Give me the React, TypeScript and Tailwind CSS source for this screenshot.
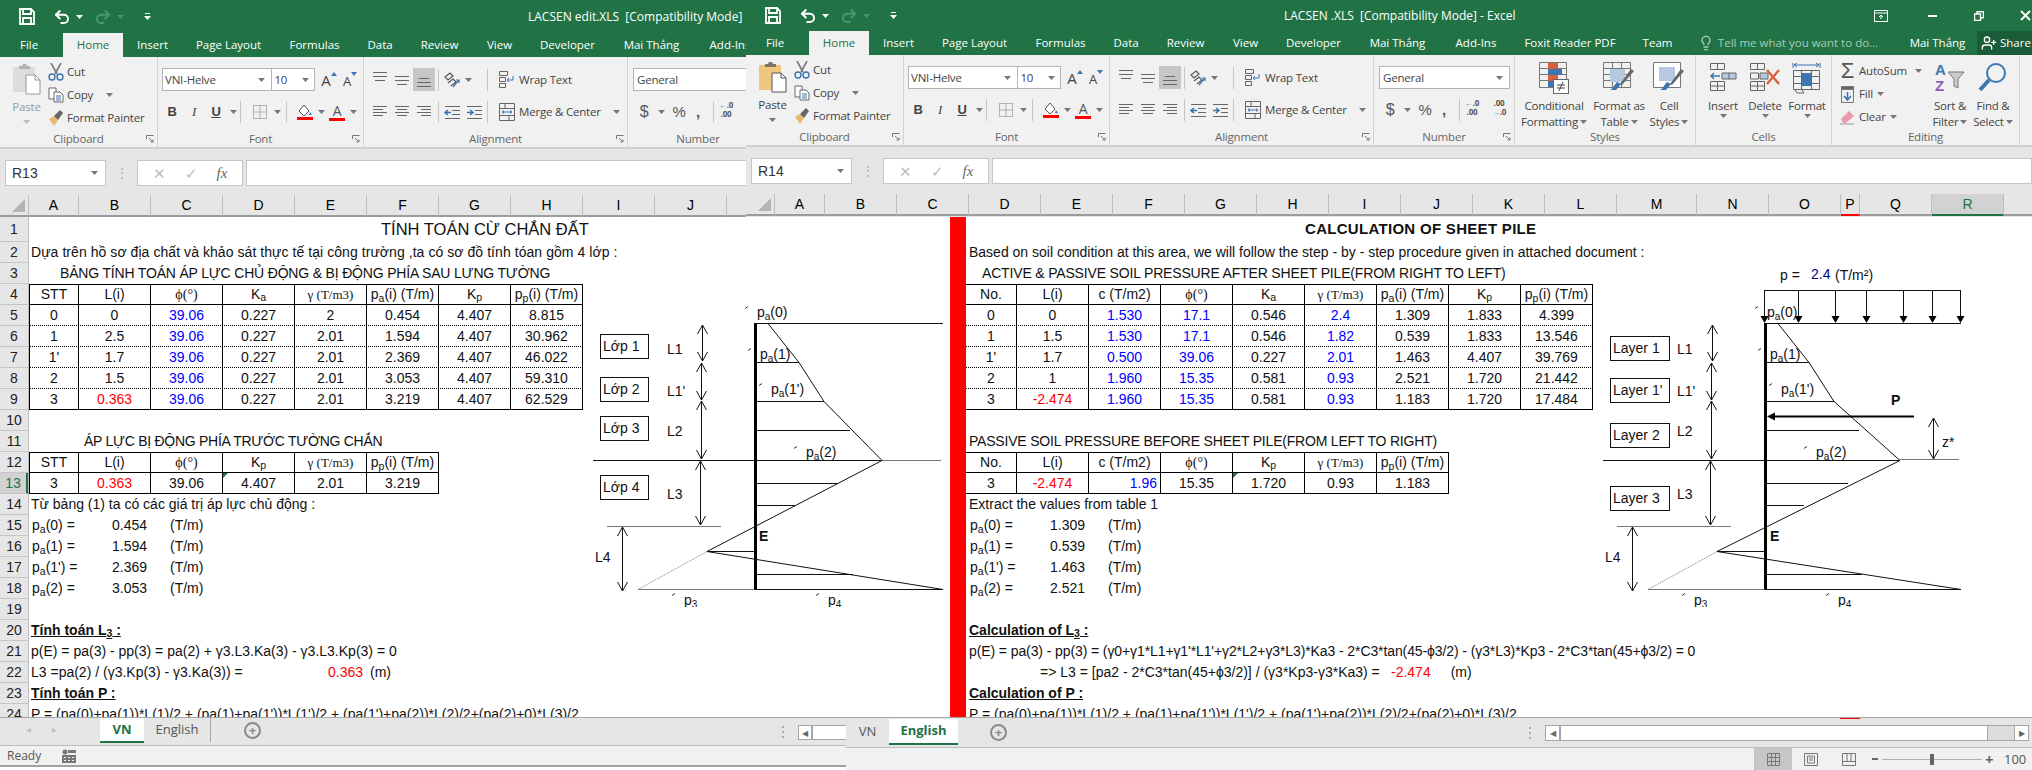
import type { ReactNode } from "react";
import { Lightbulb, Redo2, Undo2, UserPlus } from "lucide-react";

function Tri({ c = "#777" }: { c?: string }) {
  return (
    <svg width="7" height="4" viewBox="0 0 7 4" className="shrink-0">
      <path d="M0 0h7L3.5 4z" fill={c} />
    </svg>
  );
}

function Ic({ w = 16, h = 14, d, c = "#666", sw = 1 }: { w?: number; h?: number; d: string; c?: string; sw?: number }) {
  return (
    <svg width={w} height={h} viewBox={`0 0 ${w} ${h}`} fill="none" stroke={c} strokeWidth={sw} className="shrink-0">
      <path d={d} />
    </svg>
  );
}

function Launcher() {
  return (
    <svg width="8" height="8" viewBox="0 0 8 8" fill="none" stroke="#777" className="absolute right-[3px] bottom-[4px]">
      <path d="M.5 4V.5H7.5" />
      <path d="M3 3l4 4M7 4.5V7H4.5" />
    </svg>
  );
}

function Div() {
  return <div className="h-[22px] w-px shrink-0 bg-[#c6c6c6]" />;
}

function Group({ label, cls, children }: { label: string; cls: string; children: ReactNode }) {
  return (
    <div className={`relative h-full shrink-0 overflow-hidden border-r border-[#d2d2d2] ${cls}`}>
      {children}
      <div className="absolute inset-x-0 bottom-0 text-center leading-[16px] text-[#666]">{label}</div>
    </div>
  );
}

function PasteIcon({ muted }: { muted: boolean }) {
  const body = muted ? "#dedcdc" : "#efc680";
  const clip = muted ? "#b4b0b0" : "#7d7468";
  return (
    <svg width="30" height="32" viewBox="0 0 30 32">
      <rect x="1" y="4" width="22" height="25" rx="1" fill={body} />
      <path d="M7 5V3h3l1-2h3l1 2h3v3H7z" fill={clip} />
      <path d="M14 12h9l5 5v14H14z" fill="#fff" stroke={muted ? "#999" : "#555"} />
      <path d="M23 12v5h5" fill="none" stroke={muted ? "#999" : "#555"} />
    </svg>
  );
}

function Clipboard({ muted }: { muted: boolean }) {
  return (
    <Group label="Clipboard" cls="w-[158px]">
      <div className="flex h-[74px] pt-[6px]">
        <div className={`flex w-[48px] flex-col items-center pl-[5px] ${muted ? "text-[#999]" : "text-[#444]"}`}>
          <PasteIcon muted={muted} />
          <div className="mt-[4px] leading-[16px]">Paste</div>
          <div className="mt-[5px]"><Tri c={muted ? "#bbb" : "#777"} /></div>
        </div>
        <div className="flex flex-col gap-[5px] text-[#444]">
          <div className="flex h-[18px] items-center gap-[3px]">
            <svg width="16" height="18" viewBox="0 0 16 18" fill="none" className="shrink-0">
              <path d="M3 0l6 11M13 0L7 11" stroke="#777" strokeWidth="1.6" />
              <circle cx="4" cy="14" r="3" stroke="#3d75b0" strokeWidth="1.4" />
              <circle cx="12" cy="14" r="3" stroke="#3d75b0" strokeWidth="1.4" />
            </svg>
            <span>Cut</span>
          </div>
          <div className="flex h-[18px] items-center gap-[3px]">
            <svg width="16" height="16" viewBox="0 0 16 16" fill="#fff" stroke="#666" className="shrink-0">
              <path d="M1 1h7v11H1z" />
              <path d="M6 5h6l3 3v7H6z" />
              <path d="M8 9h5M8 11h5M8 13h5" stroke="#3d75b0" />
            </svg>
            <span>Copy</span>
            <span className="ml-[10px]"><Tri /></span>
          </div>
          <div className="flex h-[18px] items-center gap-[3px]">
            <svg width="16" height="18" viewBox="0 0 16 18" className="shrink-0">
              <path d="M1 10l5 7 4-6-4-4z" fill="#e8b96f" />
              <path d="M6 7l4 4 5-7-3-3z" fill="#666" />
            </svg>
            <span>Format Painter</span>
          </div>
        </div>
      </div>
      <Launcher />
    </Group>
  );
}

function Font() {
  return (
    <Group label="Font" cls="w-[206px]">
      <div className="flex h-[34px] items-start pl-[4px] pt-[11px]">
        <div className="flex h-[23px] w-[111px] items-center justify-between border border-[#b4b4b4] bg-white pl-[2px] pr-[6px]">
          <span>VNI-Helve</span>
          <Tri />
        </div>
        <div className="-ml-px flex h-[23px] w-[44px] items-center justify-between border border-[#b4b4b4] bg-white pl-[2px] pr-[5px]">
          <span>10</span>
          <Tri />
        </div>
        <div className="ml-[6px] flex h-[23px] w-[22px] items-end text-[15px] leading-[21px]">A<span className="mb-[15px] border-x-[3px] border-b-[4px] border-x-transparent border-b-[#3d75b0]" /></div>
        <div className="flex h-[23px] w-[20px] items-end text-[13px] leading-[20px]">A<span className="mb-[15px] border-x-[3px] border-t-[4px] border-x-transparent border-t-[#3d75b0]" /></div>
      </div>
      <div className="mt-[9px] flex h-[24px] items-center pl-[3px] text-[13px]">
        <div className="w-[22px] text-center font-['Liberation_Sans'] font-bold">B</div>
        <div className="w-[22px] text-center font-['Liberation_Serif'] italic">I</div>
        <div className="w-[22px] text-center font-['Liberation_Sans'] font-bold underline">U</div>
        <div className="flex w-[13px] justify-center"><Tri /></div>
        <div className="mr-[9px]"><Div /></div>
        <div className="flex w-[20px] justify-center">
          <svg width="14" height="15" viewBox="0 0 14 15" fill="none" stroke="#777" strokeDasharray="1 1">
            <path d="M.5.5h13v13H.5zM7 .5v13M.5 7h13" />
          </svg>
        </div>
        <div className="flex w-[14px] justify-center"><Tri /></div>
        <div className="ml-[2px] mr-[8px]"><Div /></div>
        <div className="flex w-[20px] flex-col items-center">
          <svg width="16" height="13" viewBox="0 0 16 13" fill="#fff" stroke="#555">
            <path d="M2 7l5-6 5 6-5 5z" />
            <path d="M13 8l2 3h-3z" fill="#3d75b0" stroke="none" />
          </svg>
          <div className="h-[3px] w-[16px] bg-[#ff0000]" />
        </div>
        <div className="flex w-[12px] justify-center"><Tri /></div>
        <div className="flex w-[20px] flex-col items-center">
          <div className="text-[14px] leading-[14px] text-[#555]">A</div>
          <div className="h-[3px] w-[16px] bg-[#ff0000]" />
        </div>
        <div className="flex w-[13px] justify-center"><Tri /></div>
      </div>
      <Launcher />
    </Group>
  );
}

function Alignment() {
  return (
    <Group label="Alignment" cls="w-[264px]">
      <div className="flex h-[34px] items-start pl-[5px] pt-[11px]">
        <div className="flex h-[23px] w-[22px] justify-center pt-[3px]"><Ic d="M1 1.5h14M1 5.5h14M3 9.5h10" /></div>
        <div className="flex h-[23px] w-[22px] items-center justify-center"><Ic d="M1 3.5h14M1 7.5h14M3 11.5h10" /></div>
        <div className="flex h-[23px] w-[22px] items-end justify-center bg-[#c6c6c6] pb-[2px]"><Ic d="M3 3.5h10M1 7.5h14M1 11.5h14" /></div>
        <div className="ml-[3px] pt-[1px]"><Div /></div>
        <div className="flex h-[23px] w-[26px] items-center justify-center">
          <svg width="18" height="18" viewBox="0 0 18 18" fill="none" stroke="#555" strokeWidth="1.2">
            <path d="M2 6l5-4 3 3-5 4zM5 12l5-4 3 3-5 4" />
            <path d="M10 16l6-7M13 9h3v3" stroke="#3d75b0" />
          </svg>
        </div>
        <div className="flex h-[23px] w-[8px] items-center"><Tri /></div>
        <div className="ml-[14px] pt-[1px]"><Div /></div>
        <div className="ml-[11px] flex h-[23px] items-center gap-[5px] text-[#444]">
          <svg width="15" height="17" viewBox="0 0 15 17" fill="none" stroke="#666">
            <path d="M.5.5h8v4h-8zM.5 6.5h6v4h-6zM.5 12.5h6v4h-6zM3 .5h3" />
            <path d="M14 5v4h-6M10 7L8 9l2 2" stroke="#3d75b0" />
          </svg>
          <span>Wrap Text</span>
        </div>
      </div>
      <div className="mt-[9px] flex h-[24px] items-center pl-[5px]">
        <div className="flex w-[22px] justify-center"><Ic d="M1 1.5h14M1 4.5h10M1 7.5h14M1 10.5h10" /></div>
        <div className="flex w-[22px] justify-center"><Ic d="M1 1.5h14M3 4.5h10M1 7.5h14M3 10.5h10" /></div>
        <div className="flex w-[22px] justify-center"><Ic d="M1 1.5h14M5 4.5h10M1 7.5h14M5 10.5h10" /></div>
        <div className="ml-[3px]"><Div /></div>
        <div className="flex w-[26px] justify-center">
          <svg width="17" height="15" viewBox="0 0 17 15" fill="none" stroke="#666">
            <path d="M1 1.5h15M8 5.5h8M8 9.5h8M1 13.5h15" />
            <path d="M7 7.5H1M4 5L1 7.5 4 10" stroke="#3d75b0" strokeWidth="1.6" />
          </svg>
        </div>
        <div className="flex w-[18px] justify-center">
          <svg width="17" height="15" viewBox="0 0 17 15" fill="none" stroke="#666">
            <path d="M1 1.5h15M9 5.5h7M9 9.5h7M1 13.5h15" />
            <path d="M1 7.5h6M4 5l3 2.5L4 10" stroke="#3d75b0" strokeWidth="1.6" />
          </svg>
        </div>
        <div className="ml-[4px]"><Div /></div>
        <div className="ml-[11px] flex items-center gap-[4px] text-[#444]">
          <svg width="16" height="18" viewBox="0 0 16 18" fill="none" stroke="#666">
            <path d="M.5.5h15v17H.5zM.5 5.5h15M.5 12.5h15M6 .5v5M10 12.5v5" />
            <path d="M3 9h10M5 7.5L3 9l2 1.500M11 7.5L13 9l-2 1.500" stroke="#3d75b0" />
          </svg>
          <span>Merge &amp; Center</span>
          <span className="ml-[8px]"><Tri /></span>
        </div>
      </div>
      <Launcher />
    </Group>
  );
}

function DecIcon({ up }: { up: boolean }) {
  return (
    <div className="flex h-[24px] w-[20px] flex-col items-center text-[8px] font-bold leading-[9px] text-[#555]">
      <div className="flex items-center">
        <span className="text-[#3d75b0]">{up ? "←" : ""}</span>
        <span>{up ? ".0" : ".00"}</span>
      </div>
      <div className="flex items-center">
        <span className="text-[#3d75b0]">{up ? "" : "→"}</span>
        <span>{up ? ".00" : ".0"}</span>
      </div>
    </div>
  );
}

function NumberGroup() {
  return (
    <Group label="Number" cls="w-[141px]">
      <div className="h-[34px] pl-[5px] pt-[11px]">
        <div className="flex h-[23px] w-[131px] items-center justify-between border border-[#b4b4b4] bg-white pl-[3px] pr-[6px]">
          <span>General</span>
          <Tri />
        </div>
      </div>
      <div className="mt-[9px] flex h-[24px] items-center pl-[6px] text-[#555]">
        <div className="w-[20px] text-center font-['Liberation_Sans'] text-[16px]">$</div>
        <div className="flex w-[14px] justify-center"><Tri /></div>
        <div className="w-[22px] text-center font-['Liberation_Sans'] text-[15px]">%</div>
        <div className="w-[16px] text-center font-['Liberation_Sans'] text-[15px] font-bold">,</div>
        <div className="ml-[7px]"><Div /></div>
        <div className="ml-[2px] flex gap-[7px]">
          <DecIcon up />
          <DecIcon up={false} />
        </div>
      </div>
      <Launcher />
    </Group>
  );
}

function BigBtn({ cls, lines, children }: { cls: string; lines: ReactNode[]; children: ReactNode }) {
  return (
    <div className={`flex flex-col items-center text-[#444] ${cls}`}>
      <div className="flex h-[32px] items-start">{children}</div>
      <div className="mt-[4px] flex flex-col items-center leading-[16px]">
        {lines.map((l, i) => (
          <div key={i} className="flex items-center gap-[2px] whitespace-nowrap">{l}</div>
        ))}
      </div>
    </div>
  );
}

function Grid4({ c = "#777" }: { c?: string }) {
  return <path d="M.5.5h27v25H.5zM9.5.5v25M18.5.5v25M.5 6.5h27M.5 12.5h27M.5 18.5h27" fill="none" stroke={c} />;
}

function Styles() {
  return (
    <Group label="Styles" cls="w-[181px]">
      <div className="flex pt-[7px]">
        <BigBtn cls="w-[78px]" lines={["Conditional", <>Formatting <Tri /></>]}>
          <svg width="30" height="32" viewBox="0 0 30 32">
            <Grid4 />
            <path d="M9 1h9v6H9z" fill="#d9603c" />
            <path d="M9 7h14v6H9z" fill="#3d75b0" />
            <path d="M9 13h9v6H9z" fill="#d9603c" />
            <path d="M9 19h5v6H9z" fill="#3d75b0" />
            <rect x="14.5" y="17.5" width="15" height="14" fill="#fff" stroke="#666" />
            <path d="M18 23h8M18 26h8M24 20l-4 9" stroke="#444" fill="none" />
          </svg>
        </BigBtn>
        <BigBtn cls="w-[52px]" lines={["Format as", <>Table <Tri /></>]}>
          <svg width="32" height="30" viewBox="0 0 32 30">
            <Grid4 />
            <path d="M7 7h15v13H7z" fill="#b6c9e0" />
            <path d="M31 9L19 23l-2-1L28 7z" fill="#666" />
            <path d="M18 22l-5 6h-6c3-1 4-5 7-8z" fill="#3d75b0" />
          </svg>
        </BigBtn>
        <BigBtn cls="w-[48px]" lines={["Cell", <>Styles <Tri /></>]}>
          <svg width="32" height="30" viewBox="0 0 32 30">
            <path d="M.5.5h27v25H.5z" fill="#fff" stroke="#777" />
            <path d="M6 5h16v14H6z" fill="#b6c9e0" />
            <path d="M31 9L19 23l-2-1L28 7z" fill="#666" />
            <path d="M18 22l-5 6h-6c3-1 4-5 7-8z" fill="#3d75b0" />
          </svg>
        </BigBtn>
      </div>
    </Group>
  );
}

function Cells() {
  return (
    <Group label="Cells" cls="w-[136px]">
      <div className="flex pl-[7px] pt-[7px]">
        <BigBtn cls="w-[40px]" lines={["Insert", <Tri />]}>
          <svg width="28" height="30" viewBox="0 0 28 30" fill="none" stroke="#666">
            <path d="M1.5 1.5h14v6h-14zM8.5 1.5v6M1.5 19.5h14v9h-14zM8.5 19.5v9M1.5 24h14" />
            <path d="M13 11h14v6H13zM20 11v6" fill="#b6c9e0" />
            <path d="M11 14H2M5 11l-3 3 3 3" stroke="#3d75b0" strokeWidth="1.5" />
          </svg>
        </BigBtn>
        <BigBtn cls="w-[44px]" lines={["Delete", <Tri />]}>
          <svg width="32" height="30" viewBox="0 0 32 30" fill="none" stroke="#666">
            <path d="M1.5 1.5h14v6h-14zM8.5 1.5v6M1.5 19.5h14v9h-14zM8.5 19.5v9M1.5 24h14M1.5 11h8v6h-8z" />
            <path d="M11 11h8v6h-8z" fill="#b6c9e0" />
            <path d="M18 8l12 14M30 8L18 22" stroke="#d9603c" strokeWidth="2.4" />
          </svg>
        </BigBtn>
        <BigBtn cls="w-[40px]" lines={["Format", <Tri />]}>
          <svg width="30" height="32" viewBox="0 0 30 32" fill="none" stroke="#666">
            <path d="M1 1v5M28 1v5M2 3h25M5 1L2 3l3 2M24 1l3 2-3 2" stroke="#3d75b0" />
            <path d="M1.5 8.5h26v19h-26zM9.5 8.5v19M19.5 8.5v19M1.5 14.5h26M1.5 21.5h26" />
            <path d="M10 11h9v13h-9z" fill="#3d75b0" stroke="none" />
            <path d="M3 28l2 3h7l-2-3" />
          </svg>
        </BigBtn>
      </div>
    </Group>
  );
}

function Editing() {
  return (
    <Group label="Editing" cls="w-[188px]">
      <div className="flex pt-[7px]">
        <div className="flex w-[97px] flex-col gap-[5px] pl-[8px] text-[#444]">
          <div className="flex h-[18px] items-center gap-[4px]">
            <span className="w-[15px] text-center font-['Liberation_Sans'] text-[22px] leading-[18px] text-[#555]">Σ</span>
            <span>AutoSum</span>
            <span className="ml-[4px]"><Tri /></span>
          </div>
          <div className="flex h-[18px] items-center gap-[4px]">
            <svg width="15" height="17" viewBox="0 0 15 17" fill="none" stroke="#777" className="shrink-0">
              <path d="M1.5.5h12v16h-12z" />
              <path d="M1.5 .5h12v3h-12z" fill="#666" />
              <path d="M7.5 6v8M4 10l3.5 4 3.500-4" stroke="#3d75b0" strokeWidth="1.6" />
            </svg>
            <span>Fill</span>
            <Tri />
          </div>
          <div className="flex h-[18px] items-center gap-[4px]">
            <svg width="15" height="15" viewBox="0 0 15 15" className="shrink-0">
              <path d="M1 9l8-8 5 5-8 7H3z" fill="#ea9aaa" />
              <path d="M0 14h14" stroke="#999" />
            </svg>
            <span>Clear</span>
            <Tri />
          </div>
        </div>
        <BigBtn cls="w-[42px]" lines={["Sort &", <>Filter <Tri /></>]}>
          <svg width="32" height="32" viewBox="0 0 32 32">
            <text x="1" y="13" fontSize="15" fontWeight="700" fontFamily="Liberation Sans" fill="#3d75b0">A</text>
            <text x="1" y="29" fontSize="15" fontWeight="700" fontFamily="Liberation Sans" fill="#8e5bb5">Z</text>
            <path d="M14 10h16l-6 7v9l-4-2v-7z" fill="#ccc" stroke="#777" />
          </svg>
        </BigBtn>
        <BigBtn cls="w-[44px]" lines={["Find &", <>Select <Tri /></>]}>
          <svg width="30" height="32" viewBox="0 0 30 32" fill="none">
            <circle cx="18" cy="11" r="9" stroke="#3d75b0" strokeWidth="2" />
            <path d="M11 18L2 28" stroke="#3d75b0" strokeWidth="4" />
          </svg>
        </BigBtn>
      </div>
    </Group>
  );
}

const tabs: [string, string][] = [
  ["Insert", "w-[29px]"],
  ["Page Layout", "w-[65px]"],
  ["Formulas", "w-[49px]"],
  ["Data", "w-[24px]"],
  ["Review", "w-[37px]"],
  ["View", "w-[25px]"],
  ["Developer", "w-[53px]"],
  ["Mai Thắng", "w-[57px]"],
  ["Add-Ins", "w-[42px]"],
  ["Foxit Reader PDF", "w-[88px]"],
  ["Team", "w-[29px]"],
];

function Chrome({ title, titleCls, name, muted, tall, children }: { title: string; titleCls: string; name: string; muted: boolean; tall: boolean; children: ReactNode }) {
  // the left window is covered by the right one past Add-Ins, so it stops there
  const shown = tall ? tabs.slice(0, 9) : tabs;
  return (
    <div className="h-[217px] w-[1286px] shrink-0 bg-[#e6e6e6] font-['Open_Sans',sans-serif] text-[11.5px] text-[#444]">
      <div className="bg-[#217346] text-white">
        <div className={`flex items-center pl-[19px] ${tall ? "h-[33px]" : "h-[31px]"}`}>
          <svg width="16" height="17" viewBox="0 0 16 17" fill="none" stroke="#fff" strokeWidth="1.8" className="shrink-0">
            <path d="M1 1h11l3 3v12H1zM4 1v5h8V1M4 16v-6h8v6" />
          </svg>
          <Undo2 size={18} strokeWidth={2.6} className="ml-[18px]" />
          <span className="ml-[5px]"><Tri c="#fff" /></span>
          <Redo2 size={18} strokeWidth={2.6} className="ml-[11px] text-[#4f9472]" />
          <span className="ml-[5px]"><Tri c="#4f9472" /></span>
          <div className="ml-[20px] flex flex-col items-center gap-[2px]">
            <div className="h-px w-[5px] bg-white" />
            <Tri c="#fff" />
          </div>
          <div className={`whitespace-pre text-[12px] ${titleCls}`}>{title}</div>
          {!tall && (
            <div className="ml-auto flex items-center pr-[1px]">
              <svg width="14" height="12" viewBox="0 0 14 12" fill="none" stroke="#fff">
                <path d="M.5.500h13v11H.5zM.5 3h13M7 9V5M5 7l2-2 2 2" />
              </svg>
              <div className="ml-[40px] h-[2px] w-[9px] bg-white" />
              <svg width="10" height="10" viewBox="0 0 10 10" fill="none" stroke="#fff" strokeWidth="1.4" className="ml-[37px]">
                <path d="M.5 3h6v6.500h-6zM3 3V.700h6.500v6H7" />
              </svg>
              <svg width="11" height="11" viewBox="0 0 11 11" fill="none" stroke="#fff" strokeWidth="1.8" className="ml-[36px]">
                <path d="M1 1l9 9M10 1l-9 9" />
              </svg>
            </div>
          )}
        </div>
        <div className="flex h-[24px] items-center whitespace-nowrap">
          <div className="w-[63px] pl-[20px]">File</div>
          <div className="flex h-full w-[60px] items-center justify-center bg-[#f1f1f1] text-[#217346]">Home</div>
          <div className="flex gap-[29px] pl-[15px]">
            {shown.map(([t, w]) => (
              <span key={t} className={`flex justify-center ${w}`}>{t}</span>
            ))}
          </div>
          {!tall && (
            <>
              <Lightbulb size={16} className="ml-[26px] shrink-0 text-[#a8cdb8]" />
              <span className="ml-[4px] flex w-[160px] justify-center text-[#a8cdb8]">Tell me what you want to do...</span>
              <span className="ml-[31px] flex w-[57px] justify-center">Mai Thắng</span>
              <div className="ml-auto flex h-full w-[55px] items-center gap-[3px] bg-[#1a5c38] pl-[4px]">
                <UserPlus size={16} className="shrink-0" />
                <span>Share</span>
              </div>
            </>
          )}
        </div>
      </div>
      <div className="flex h-[92px] border-b-2 border-[#d0d0d0] bg-[#f1f1f1] tracking-[-0.2px]">
        <Clipboard muted={muted} />
        <Font />
        <Alignment />
        <NumberGroup />
        {!tall && (
          <>
            <Styles />
            <Cells />
            <Editing />
          </>
        )}
      </div>
      <div className="mt-[11px] flex h-[26px] items-stretch">
        <div className="ml-[5px] flex w-[101px] items-center justify-between border border-[#c6c6c6] bg-white pl-[6px] pr-[7px] font-['Liberation_Sans'] text-[14px] text-[#333]">
          <span>{name}</span>
          <Tri />
        </div>
        <div className="flex w-[31px] items-center justify-center text-[#aaa]">⋮</div>
        <div className="flex w-[106px] items-center justify-around border border-[#c6c6c6] bg-white px-[5px]">
          <span className="text-[15px] text-[#bdbdbd]">✕</span>
          <span className="text-[15px] text-[#bdbdbd]">✓</span>
          <span className="font-['Liberation_Serif'] text-[15px] italic text-[#666]">fx</span>
        </div>
        <div className="ml-[3px] flex-1 border border-[#c6c6c6] bg-white" />
      </div>
      {children}
    </div>
  );
}

function ColHead({ label, cls, active }: { label: string; cls: string; active?: "green" | "red" }) {
  const line = active === "green" ? "border-b-[#217346] bg-[#d2d2d2] text-[#217346]" : active === "red" ? "border-b-[#ff0000]" : "border-b-[#9c9c9c]";
  return <div className={`flex h-full shrink-0 items-center justify-center border-b-2 border-r border-r-[#bdbdbd] ${line} ${cls}`}>{label}</div>;
}

function HeaderRow({ cols, mt }: { cols: ReactNode; mt: string }) {
  return (
    <div className={`flex h-[22px] font-['Liberation_Sans'] text-[14px] text-black ${mt}`}>
      <div className="flex h-full w-[29px] shrink-0 items-end justify-end border-b-2 border-r border-b-[#9c9c9c] border-r-[#bdbdbd] pb-[3px] pr-[3px]">
        <div className="h-0 w-0 border-b-[13px] border-l-[13px] border-b-[#b4b4b4] border-l-transparent" />
      </div>
      {cols}
      <div className="flex-1 border-b-2 border-b-[#9c9c9c]" />
    </div>
  );
}

function P({ s, t }: { s: string; t: string }) {
  return <span>p<sub>{s}</sub>{t}</span>;
}

const phi = <span className="font-['Liberation_Serif']">ϕ(°)</span>;
const gam = <span className="font-['Liberation_Serif'] text-[13px]">γ (T/m3)</span>;

function TableRow({ cells, dotted, top, right }: { cells: ReactNode[]; dotted?: boolean; top?: boolean; right?: boolean }) {
  return (
    <div className={`flex h-[21px] w-max border-b border-black ${dotted ? "border-dotted" : ""} ${top ? "border-t border-t-black" : ""}`}>
      {cells.map((c, i) => (
        <div
          key={i}
          className={`relative flex h-full items-center justify-center whitespace-pre border-r border-solid border-black ${
            i === 0 ? (right ? "w-[51px]" : "w-[50px] border-l") : "w-[72px]"
          }`}
        >
          {c}
        </div>
      ))}
    </div>
  );
}

function B({ children }: { children: ReactNode }) {
  return <span className="text-[#0000ff]">{children}</span>;
}
function R({ children }: { children: ReactNode }) {
  return <span className="text-[#ff0000]">{children}</span>;
}

function Flag() {
  return <div className="absolute left-0 top-0 h-0 w-0 border-r-[5px] border-t-[5px] border-r-transparent border-t-[#107c41]" />;
}

function Line({ children, cls = "" }: { children?: ReactNode; cls?: string }) {
  return <div className={`flex h-[21px] items-center whitespace-pre ${cls}`}>{children}</div>;
}

function PLine({ t, v, a, b }: { t: string; v: string; a: string; b: string }) {
  return (
    <Line cls={a}>
      <span className={b}><P s="a" t={t} /></span>
      <span className="w-[58px]">{v}</span>
      <span>(T/m)</span>
    </Line>
  );
}

function VArrow({ x, y1, y2 }: { x: number; y1: number; y2: number }) {
  return (
    <path
      d={`M${x} ${y1}V${y2}M${x - 5} ${y1 + 9}L${x} ${y1}L${x + 5} ${y1 + 9}M${x - 5} ${y2 - 9}L${x} ${y2}L${x + 5} ${y2 - 9}`}
      fill="none"
      stroke="#111"
    />
  );
}

function Sym({ x, y, s, t }: { x: number; y: number; s: string; t: string }) {
  return (
    <text x={x} y={y} fontSize="14" fontFamily="Liberation Sans" fill="#111">
      p<tspan dy="3" fontSize="10">{s}</tspan><tspan dy="-3">{t}</tspan>
    </text>
  );
}

function Txt({ x, y, t, b, c }: { x: number; y: number; t: string; b?: boolean; c?: string }) {
  return (
    <text x={x} y={y} fontSize="14" fontWeight={b ? 700 : 400} fontFamily="Liberation Sans" fill={c ?? "#111"}>
      {t}
    </text>
  );
}

function Tick({ x, y }: { x: number; y: number }) {
  return <path d={`M${x} ${y + 1.5}l3 -2`} stroke="#333" fill="none" />;
}

function Box({ x, y, w, t }: { x: number; y: number; w: number; t: string }) {
  return (
    <g>
      <rect x={x + 0.5} y={y + 0.5} width={w} height="24" fill="#fff" stroke="#111" />
      <Txt x={x + 3} y={y + 17} t={t} />
    </g>
  );
}

function DiagramLeft() {
  return (
    <svg width="355" height="390" viewBox="590 217 355 390" className="absolute left-[561px] top-0">
      <Box x={600} y={334} w={48} t="Lớp 1" />
      <Box x={600} y={377} w={48} t="Lớp 2" />
      <Box x={600} y={416} w={48} t="Lớp 3" />
      <Box x={600} y={475} w={48} t="Lớp 4" />
      <Txt x={667} y={354} t="L1" />
      <Txt x={667} y={396} t="L1'" />
      <Txt x={667} y={436} t="L2" />
      <Txt x={667} y={499} t="L3" />
      <Txt x={595} y={562} t="L4" />
      <VArrow x={702.5} y1={325} y2={361} />
      <VArrow x={701.5} y1={363} y2={400} />
      <VArrow x={701.5} y1={401} y2={459} />
      <VArrow x={700.5} y1={461} y2={525} />
      <VArrow x={622.5} y1={527} y2={591} />
      <path d="M755 323.500H943M593 460.500H880" stroke="#111" fill="none" />
      <path d="M880 460.500H941M607 526.500H721M638 589.500H755" stroke="#777" fill="none" />
      <path d="M755 589.500H943" stroke="#111" fill="none" />
      <path d="M755.500 323V589.500" stroke="#000" strokeWidth="3" fill="none" />
      <path d="M768 323.500L799 362.500L824 401.500L882 460.500L707 551.500L943 589.500" stroke="#111" fill="none" />
      <path d="M707 551.500L638 589.500" stroke="#777" strokeDasharray="1 1" fill="none" />
      <path d="M757 362.500H799M757 401.500H824M757 430.500H850M757 483.500H838M757 505.500H795M707 551.500H754M757 574.500H853" stroke="#111" fill="none" />
      <Tick x={745} y={307} />
      <Sym x={757} y={317} s="a" t="(0)" />
      <Tick x={748} y={349} />
      <Sym x={760} y={359} s="a" t="(1)" />
      <Tick x={759} y={384} />
      <Sym x={771} y={394} s="a" t="(1')" />
      <Tick x={794} y={447} />
      <Sym x={806} y={457} s="a" t="(2)" />
      <Txt x={759} y={541} t="E" b />
      <Tick x={672} y={594} />
      <Sym x={684} y={605} s="3" t="" />
      <Tick x={816} y={594} />
      <Sym x={828} y={605} s="4" t="" />
    </svg>
  );
}

function DiagramRight() {
  const xs = [1764.5, 1798.5, 1835.5, 1866.5, 1903.5, 1932.5, 1960.5];
  return (
    <svg width="380" height="345" viewBox="1595 262 380 345" className="absolute left-[629px] top-[45px]">
      <Box x={1610} y={336} w={59} t="Layer 1" />
      <Box x={1610} y={378} w={59} t="Layer 1'" />
      <Box x={1610} y={423} w={59} t="Layer 2" />
      <Box x={1610} y={486} w={59} t="Layer 3" />
      <Txt x={1677} y={354} t="L1" />
      <Txt x={1677} y={396} t="L1'" />
      <Txt x={1677} y={436} t="L2" />
      <Txt x={1677} y={499} t="L3" />
      <Txt x={1605} y={562} t="L4" />
      <VArrow x={1712.5} y1={325} y2={361} />
      <VArrow x={1711.5} y1={363} y2={400} />
      <VArrow x={1711.5} y1={401} y2={459} />
      <VArrow x={1710.5} y1={461} y2={525} />
      <VArrow x={1632.5} y1={527} y2={591} />
      <Txt x={1780} y={280} t="p =" />
      <Txt x={1811} y={279} t="2.4" c="#00008b" />
      <text x={1835} y={280} fontSize="14" fontFamily="Liberation Sans" fill="#111">(T/m²)</text>
      <path d="M1764 290.500H1961M1764 323.500H1961M1603 460.500H1900" stroke="#111" fill="none" />
      {xs.map((x) => (
        <g key={x}>
          <path d={`M${x} 290V316`} stroke="#111" fill="none" />
          <path d={`M${x - 4} 316h8l-4 7z`} fill="#000" />
        </g>
      ))}
      <path d="M1900 459.500H1959M1617 526.500H1731M1648 589.500H1765" stroke="#777" fill="none" />
      <path d="M1765 589.500H1961" stroke="#111" fill="none" />
      <path d="M1765.500 323V589.500" stroke="#000" strokeWidth="3" fill="none" />
      <path d="M1778 323.500L1809 362.500L1834 401.500L1900 460.500L1717 551.500L1961 589.500" stroke="#111" fill="none" />
      <path d="M1717 551.500L1648 589.500" stroke="#777" strokeDasharray="1 1" fill="none" />
      <path d="M1767 362.500H1809M1767 401.500H1834M1767 430.500H1859M1767 483.500H1848M1767 505.500H1804M1717 551.500H1764M1767 574.500H1862" stroke="#111" fill="none" />
      <path d="M1775 416.500H1914" stroke="#000" strokeWidth="2" fill="none" />
      <path d="M1767 416.500l8 -4v8z" fill="#000" />
      <Txt x={1891} y={405} t="P" b />
      <VArrow x={1933.5} y1={418} y2={459} />
      <Txt x={1942} y={447} t="z*" />
      <Tick x={1755} y={307} />
      <Sym x={1767} y={317} s="a" t="(0)" />
      <Tick x={1758} y={349} />
      <Sym x={1770} y={359} s="a" t="(1)" />
      <Tick x={1769} y={384} />
      <Sym x={1781} y={394} s="a" t="(1')" />
      <Tick x={1804} y={447} />
      <Sym x={1816} y={457} s="a" t="(2)" />
      <Txt x={1770} y={541} t="E" b />
      <Tick x={1682} y={594} />
      <Sym x={1694} y={605} s="3" t="" />
      <Tick x={1826} y={594} />
      <Sym x={1838} y={605} s="4" t="" />
    </svg>
  );
}

function RowHeads() {
  const rows = Array.from({ length: 24 }, (_, i) => i + 1);
  return (
    <div className="w-[29px] shrink-0 border-r border-[#bdbdbd] bg-[#e6e6e6] text-[#222]">
      {rows.map((n) => (
        <div
          key={n}
          className={`flex items-center justify-center border-b border-[#c6c6c6] ${n === 1 ? "h-[25px]" : "h-[21px]"} ${n === 13 ? "border-r-2 border-r-[#217346] bg-[#d2d2d2] text-[#217346]" : ""}`}
        >
          {n}
        </div>
      ))}
    </div>
  );
}

function LeftSheet() {
  const data = [
    ["0", "0", "8.815", "2", "0.454"],
    ["1", "2.5", "30.962", "2.01", "1.594"],
    ["1'", "1.7", "46.022", "2.01", "2.369"],
    ["2", "1.5", "59.310", "2.01", "3.053"],
    ["3", <R>0.363</R>, "62.529", "2.01", "3.219"],
  ];
  return (
    <div className="flex h-full w-[950px] shrink-0 bg-white font-['Liberation_Sans',Arial,sans-serif] text-[14px] text-[#111]">
      <RowHeads />
      <div className="relative flex-1">
        <Line cls="h-[25px] pl-[352px] text-[16.5px]">TÍNH TOÁN CỪ CHẮN ĐẤT</Line>
        <Line cls="pl-[2px] tracking-[0.06px]">Dựa trên hồ sơ địa chất và khảo sát thực tế tại công trường ,ta có sơ đồ tính tóan gồm 4 lớp :</Line>
        <Line cls="pl-[31px] tracking-[-0.18px]">BẢNG TÍNH TOÁN ÁP LỰC CHỦ ĐỘNG &amp; BỊ ĐỘNG PHÍA SAU LƯNG TƯỜNG</Line>
        <TableRow top cells={["STT", "L(i)", phi, <>K<sub>a</sub></>, gam, <P s="a" t="(i) (T/m)" />, <>K<sub>p</sub></>, <P s="p" t="(i) (T/m)" />]} />
        {data.map((d, i) => (
          <TableRow
            key={i}
            dotted={i < 4}
            cells={[d[0], d[1], <B>39.06</B>, "0.227", d[3], d[4], "4.407", d[2]]}
          />
        ))}
        <Line />
        <Line cls="pl-[55px] tracking-[-0.27px]">ÁP LỰC BỊ ĐỘNG PHÍA TRƯỚC TƯỜNG CHẮN</Line>
        <TableRow top cells={["STT", "L(i)", phi, <>K<sub>p</sub></>, gam, <P s="p" t="(i) (T/m)" />]} />
        <TableRow cells={["3", <R>0.363</R>, "39.06", <><Flag />4.407</>, "2.01", "3.219"]} />
        <Line cls="pl-[2px]">Từ bảng (1) ta có các giá trị áp lực chủ động :</Line>
        <PLine t="(0) =" v="0.454" a="pl-[3px]" b="w-[80px]" />
        <PLine t="(1) =" v="1.594" a="pl-[3px]" b="w-[80px]" />
        <PLine t="(1') =" v="2.369" a="pl-[3px]" b="w-[80px]" />
        <PLine t="(2) =" v="3.053" a="pl-[3px]" b="w-[80px]" />
        <Line />
        <Line cls="pl-[2px] font-bold underline">Tính toán L<sub>3</sub> :</Line>
        <Line cls="pl-[2px]">p(E) = pa(3) - pp(3) = pa(2) + γ3.L3.Ka(3) - γ3.L3.Kp(3) = 0</Line>
        <Line cls="pl-[2px]">
          <span className="w-[297px]">L3 =pa(2) / (γ3.Kp(3) - γ3.Ka(3)) =</span>
          <R>0.363</R>
          <span className="ml-[7px]">(m)</span>
        </Line>
        <Line cls="pl-[2px] font-bold underline">Tính toán P :</Line>
        <Line cls="pl-[2px]">P = (pa(0)+pa(1))*L(1)/2 + (pa(1)+pa(1'))*L(1')/2 + (pa(1')+pa(2))*L(2)/2+(pa(2)+0)*L(3)/2</Line>
        <DiagramLeft />
      </div>
    </div>
  );
}

function RightSheet() {
  const data: ReactNode[][] = [
    ["0", "0", <B>1.530</B>, <B>17.1</B>, "0.546", <B>2.4</B>, "1.309", "1.833", "4.399"],
    ["1", "1.5", <B>1.530</B>, <B>17.1</B>, "0.546", <B>1.82</B>, "0.539", "1.833", "13.546"],
    ["1'", "1.7", <B>0.500</B>, <B>39.06</B>, "0.227", <B>2.01</B>, "1.463", "4.407", "39.769"],
    ["2", "1", <B>1.960</B>, <B>15.35</B>, "0.581", <B>0.93</B>, "2.521", "1.720", "21.442"],
    ["3", <R>-2.474</R>, <B>1.960</B>, <B>15.35</B>, "0.581", <B>0.93</B>, "1.183", "1.720", "17.484"],
  ];
  return (
    <div className="relative h-full flex-1 bg-white font-['Liberation_Sans',Arial,sans-serif] text-[14px] text-[#111]">
      <Line cls="h-[25px] pl-[339px] text-[15px] font-bold tracking-[0.3px]">CALCULATION OF SHEET PILE</Line>
      <Line cls="pl-[3px]">Based on soil condition at this area, we will follow the step - by - step procedure given in attached document :</Line>
      <Line cls="pl-[16px] tracking-[-0.17px]">ACTIVE &amp; PASSIVE SOIL PRESSURE AFTER SHEET PILE(FROM RIGHT TO LEFT)</Line>
      <TableRow right top cells={["No.", "L(i)", "c (T/m2)", phi, <>K<sub>a</sub></>, gam, <P s="a" t="(i) (T/m)" />, <>K<sub>p</sub></>, <P s="p" t="(i) (T/m)" />]} />
      {data.map((d, i) => (
        <TableRow key={i} right dotted={i < 4} cells={d} />
      ))}
      <Line />
      <Line cls="pl-[3px] tracking-[-0.2px]">PASSIVE SOIL PRESSURE BEFORE SHEET PILE(FROM LEFT TO RIGHT)</Line>
      <TableRow right top cells={["No.", "L(i)", "c (T/m2)", phi, <>K<sub>p</sub></>, gam, <P s="p" t="(i) (T/m)" />]} />
      <TableRow
        right
        cells={["3", <R>-2.474</R>, <span className="w-full pr-[3px] text-right"><B>1.96</B></span>, "15.35", <><Flag />1.720</>, "0.93", "1.183"]}
      />
      <Line cls="pl-[3px]">Extract the values from table 1</Line>
      <PLine t="(0) =" v="1.309" a="pl-[4px]" b="w-[80px]" />
      <PLine t="(1) =" v="0.539" a="pl-[4px]" b="w-[80px]" />
      <PLine t="(1') =" v="1.463" a="pl-[4px]" b="w-[80px]" />
      <PLine t="(2) =" v="2.521" a="pl-[4px]" b="w-[80px]" />
      <Line />
      <Line cls="pl-[3px] font-bold underline">Calculation of L<sub>3</sub> :</Line>
      <Line cls="pl-[3px] tracking-[-0.1px]">p(E) = pa(3) - pp(3) = (γ0+γ1*L1+γ1'*L1'+γ2*L2+γ3*L3)*Ka3 - 2*C3*tan(45-ϕ3/2) - (γ3*L3)*Kp3 - 2*C3*tan(45+ϕ3/2) = 0</Line>
      <Line cls="pl-[74px]">
        <span className="w-[351px]">=&gt; L3 = [pa2 - 2*C3*tan(45+ϕ3/2)] / (γ3*Kp3-γ3*Ka3) =</span>
        <R>-2.474</R>
        <span className="ml-[20px]">(m)</span>
      </Line>
      <Line cls="pl-[3px] font-bold underline">Calculation of P :</Line>
      <Line cls="pl-[3px]">P = (pa(0)+pa(1))*L(1)/2 + (pa(1)+pa(1'))*L(1')/2 + (pa(1')+pa(2))*L(2)/2+(pa(2)+0)*L(3)/2</Line>
      <DiagramRight />
    </div>
  );
}

function PlusCircle() {
  return (
    <div className="flex h-[17px] w-[17px] shrink-0 items-center justify-center rounded-full border-2 border-[#8a8a8a] text-[13px] font-bold leading-none text-[#8a8a8a]">+</div>
  );
}

function Dots() {
  return (
    <div className="flex flex-col gap-[3px]">
      <div className="h-[2px] w-[2px] bg-[#aaa]" />
      <div className="h-[2px] w-[2px] bg-[#aaa]" />
      <div className="h-[2px] w-[2px] bg-[#aaa]" />
    </div>
  );
}

function LeftBottom() {
  return (
    <div className="flex h-full w-[846px] shrink-0 flex-col font-['Open_Sans',sans-serif] text-[13px]">
      <div className="flex h-[29px] shrink-0 items-start border-y border-[#a6a6a6] border-b-[#bdbdbd] bg-[#e6e6e6]">
        <div className="flex w-[100px] gap-[21px] pl-[26px] pt-[4px] text-[10px] text-[#c0c0c0]">
          <span>◂</span>
          <span>▸</span>
        </div>
        <div className="flex h-[25px] w-[44px] items-center justify-center border-b-2 border-[#217346] bg-white font-bold text-[#217346]">VN</div>
        <div className="flex h-[24px] w-[67px] items-center justify-center border-r border-[#a6a6a6] text-[#555]">English</div>
        <div className="ml-[33px] mt-[4px]"><PlusCircle /></div>
        <div className="ml-auto mt-[8px]"><Dots /></div>
        <div className="ml-[14px] mt-[7px] flex h-[15px] w-[48px] items-center border border-r-0 border-[#a6a6a6] bg-white">
          <div className="flex h-full w-[14px] items-center justify-center border-r-2 border-[#a6a6a6] text-[8px] text-[#666]">◀</div>
        </div>
      </div>
      <div className="flex h-[21px] shrink-0 items-center border-b-2 border-[#a0a0a0] bg-[#f1f1f1] pl-[7px] text-[12px] text-[#555]">
        <span>Ready</span>
        <svg width="14" height="14" viewBox="0 0 14 14" fill="#777" className="ml-[21px]">
          <circle cx="3" cy="3" r="2.500" />
          <rect x="6" y="1" width="8" height="3" />
          <path d="M0 6h14v8H0z" />
          <path d="M2 8h2v1H2zM6 8h2v1H6zM10 8h2v1h-2zM2 11h2v1H2zM6 11h2v1H6zM10 11h2v1h-2z" fill="#f1f1f1" />
        </svg>
      </div>
    </div>
  );
}

function RightBottom() {
  return (
    <div className="relative flex h-full flex-1 flex-col font-['Open_Sans',sans-serif] text-[13px]">
      <div className="absolute left-[994px] top-[1px] h-[1px] w-[20px] bg-[#ff0000]" />
      <div className="flex h-[31px] shrink-0 items-start border-y border-[#a6a6a6] border-b-[#bdbdbd] bg-[#e6e6e6] pt-[1px]">
        <div className="flex h-[26px] w-[43px] items-center justify-center text-[#555]">VN</div>
        <div className="flex h-[26px] w-[69px] items-center justify-center border-b-2 border-[#217346] bg-white font-bold text-[#217346]">English</div>
        <div className="ml-[32px] mt-[5px]"><PlusCircle /></div>
        <div className="ml-auto mt-[8px]"><Dots /></div>
        <div className="ml-[14px] mr-[3px] mt-[6px] flex h-[16px] w-[484px] border border-[#a6a6a6] bg-white">
          <div className="flex h-full w-[15px] items-center justify-center border-r-2 border-[#a6a6a6] text-[8px] text-[#666]">◀</div>
          <div className="flex-1" />
          <div className="h-full w-[27px] border-l border-[#a6a6a6] bg-[#dcdcdc]" />
          <div className="flex h-full w-[14px] items-center justify-center border-l border-[#a6a6a6] text-[8px] text-[#666]">▶</div>
        </div>
      </div>
      <div className="flex flex-1 items-stretch justify-end border-b-2 border-[#a0a0a0] bg-[#f1f1f1] text-[13px] text-[#555]">
        <div className="flex w-[38px] items-center justify-center bg-[#c6c6c6]">
          <svg width="13" height="13" viewBox="0 0 13 13" fill="none" stroke="#777">
            <path d="M.5.500h12v12H.5zM4.500.500v12M8.500.500v12M.5 4.500h12M.5 8.500h12" />
          </svg>
        </div>
        <div className="flex w-[38px] items-center justify-center">
          <svg width="14" height="13" viewBox="0 0 14 13" fill="none" stroke="#777">
            <path d="M.5.500h13v12H.5zM3.500 3h7v7h-7zM5 5h4M5 7h4" />
          </svg>
        </div>
        <div className="flex w-[38px] items-center justify-center">
          <svg width="14" height="13" viewBox="0 0 14 13" fill="none" stroke="#777">
            <path d="M.5.500h13v12H.5zM.5 8.500h13M5 .500v8M9 .500v8" />
          </svg>
        </div>
        <div className="ml-[4px] flex w-[128px] items-center">
          <div className="h-[2px] w-[6px] bg-[#666]" />
          <div className="relative ml-[4px] h-px w-[100px] bg-[#b0b0b0]">
            <div className="absolute -top-[5px] left-[48px] h-[11px] w-[4px] bg-[#666]" />
          </div>
          <span className="ml-[3px] text-[15px] font-bold text-[#666]">+</span>
        </div>
        <div className="flex w-[32px] items-center overflow-hidden pl-[4px]">100</div>
      </div>
    </div>
  );
}

export default function App() {
  const leftCols = (
    <>
      <ColHead label="A" cls="w-[50px]" />
      {["B", "C", "D", "E", "F", "G", "H", "I", "J"].map((c) => (
        <ColHead key={c} label={c} cls="w-[72px]" />
      ))}
    </>
  );
  const rightCols = (
    <>
      <ColHead label="A" cls="w-[50px]" />
      {["B", "C", "D", "E", "F", "G", "H", "I", "J", "K", "L"].map((c) => (
        <ColHead key={c} label={c} cls="w-[72px]" />
      ))}
      <ColHead label="M" cls="w-[80px]" />
      <ColHead label="N" cls="w-[72px]" />
      <ColHead label="O" cls="w-[72px]" />
      <ColHead label="P" cls="w-[19px]" active="red" />
      <ColHead label="Q" cls="w-[72px]" />
      <ColHead label="R" cls="w-[72px]" active="green" />
    </>
  );
  return (
    <div className="flex h-[770px] w-[2032px] flex-col overflow-hidden bg-white">
      <div className="flex h-[217px] shrink-0">
        <div className="w-[746px] shrink-0 overflow-hidden">
          <Chrome title="LACSEN edit.XLS  [Compatibility Mode] -" titleCls="ml-[377px]" name="R13" muted tall>
            <HeaderRow cols={leftCols} mt="mt-[9px]" />
          </Chrome>
        </div>
        <Chrome title="LACSEN .XLS  [Compatibility Mode] - Excel" titleCls="ml-[387px]" name="R14" muted={false} tall={false}>
          <HeaderRow cols={rightCols} mt="mt-[10px]" />
        </Chrome>
      </div>
      <div className="flex h-[500px] shrink-0 overflow-hidden">
        <LeftSheet />
        <div className="w-[16px] shrink-0 bg-[#ff0000]" />
        <RightSheet />
      </div>
      <div className="flex flex-1">
        <LeftBottom />
        <RightBottom />
      </div>
    </div>
  );
}
